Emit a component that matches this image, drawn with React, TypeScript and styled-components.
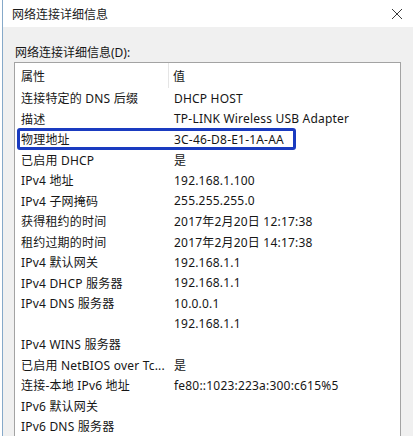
import styled, { createGlobalStyle } from 'styled-components';

const GlobalStyle = createGlobalStyle`
  html, body {
    margin: 0;
    padding: 0;
    background: #ffffff;
  }
  body {
    font-family: "Noto Sans", "Noto Sans CJK SC", sans-serif;
    font-size: 12px;
    color: #161616;
  }
`;

interface Detail {
  name: string;
  value: string;
  marked?: boolean;
}

const details: Detail[] = [
  { name: '连接特定的 DNS 后缀', value: 'DHCP HOST' },
  { name: '描述', value: 'TP-LINK Wireless USB Adapter' },
  { name: '物理地址', value: '3C-46-D8-E1-1A-AA', marked: true },
  { name: '已启用 DHCP', value: '是' },
  { name: 'IPv4 地址', value: '192.168.1.100' },
  { name: 'IPv4 子网掩码', value: '255.255.255.0' },
  { name: '获得租约的时间', value: '2017年2月20日 12:17:38' },
  { name: '租约过期的时间', value: '2017年2月20日 14:17:38' },
  { name: 'IPv4 默认网关', value: '192.168.1.1' },
  { name: 'IPv4 DHCP 服务器', value: '192.168.1.1' },
  { name: 'IPv4 DNS 服务器', value: '10.0.0.1' },
  { name: '', value: '192.168.1.1' },
  { name: 'IPv4 WINS 服务器', value: '' },
  { name: '已启用 NetBIOS over Tc...', value: '是' },
  { name: '连接-本地 IPv6 地址', value: 'fe80::1023:223a:300:c615%5' },
  { name: 'IPv6 默认网关', value: '' },
  { name: 'IPv6 DNS 服务器', value: '' },
];

export default function App() {
  return (
    <>
      <GlobalStyle />
      <Window>
        <TitleBar>
          <Title>网络连接详细信息</Title>
          <CloseButton aria-label="关闭">
            <svg width="12" height="12" viewBox="0 0 12 12">
              <path d="M1 1 L11 11 M11 1 L1 11" stroke="#3a3a3a" strokeWidth="1" fill="none" />
            </svg>
          </CloseButton>
        </TitleBar>
        <Body>
          <Label>网络连接详细信息(D):</Label>
          <ListBox>
            <HeaderRow>
              <HeaderCell>属性</HeaderCell>
              <HeaderCell $last>值</HeaderCell>
            </HeaderRow>
            {details.map((item, index) => (
              <Row key={index} $marked={item.marked}>
                <NameCell>{item.name}</NameCell>
                <ValueCell>{item.value}</ValueCell>
              </Row>
            ))}
          </ListBox>
        </Body>
      </Window>
    </>
  );
}

const Window = styled.div`
  margin-left: 2px;
  height: 436px;
  border-left: 1px solid #86a9c9;
  display: flex;
  flex-direction: column;
  overflow: hidden;
`;

const TitleBar = styled.div`
  height: 27px;
  flex-shrink: 0;
  background: #ffffff;
  display: flex;
  align-items: center;
  justify-content: space-between;
  padding: 0 8px 0 9px;
`;

const Title = styled.span`
  font-size: 12px;
  color: #1b1b1b;
`;

const CloseButton = styled.span`
  display: flex;
  align-items: center;
  justify-content: center;
  width: 16px;
  height: 16px;
`;

const Body = styled.div`
  flex: 1;
  background: #f0f0f0;
  padding: 18px 10px 0 11px;
`;

const Label = styled.div`
  height: 16px;
  line-height: 16px;
  padding-left: 1px;
`;

const ListBox = styled.div`
  margin-top: 1px;
  width: 385px;
  height: 420px;
  background: #ffffff;
  border: 1px solid #a3a3a3;
`;

const HeaderRow = styled.div`
  display: grid;
  grid-template-columns: 154px 1fr;
  height: 25px;
`;

const HeaderCell = styled.div<{ $last?: boolean }>`
  display: flex;
  align-items: center;
  padding-left: ${({ $last }) => ($last ? '4px' : '6px')};
  border-right: ${({ $last }) => ($last ? 'none' : '1px solid #e5e5e5')};
`;

const Row = styled.div<{ $marked?: boolean }>`
  position: relative;
  display: grid;
  grid-template-columns: 154px 1fr;
  height: 20.5px;
  align-items: center;
  letter-spacing: 0.2px;

  &::after {
    content: '';
    display: ${({ $marked }) => ($marked ? 'block' : 'none')};
    position: absolute;
    left: 2px;
    top: -1px;
    width: 273px;
    height: 16px;
    border: 3px solid #1a3bc0;
    border-radius: 3px;
  }
`;

const NameCell = styled.div`
  padding-left: 6px;
  white-space: nowrap;
  overflow: hidden;
`;

const ValueCell = styled.div`
  padding-left: 5px;
  white-space: nowrap;
`;
